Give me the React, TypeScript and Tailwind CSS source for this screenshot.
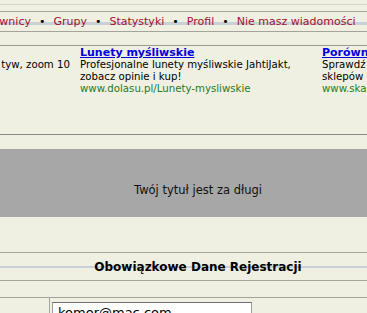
import React from "react";

const sans = { fontFamily: '"DejaVu Sans", Verdana, sans-serif' };

function Sep() {
  return <span className="px-[8px] text-black">•</span>;
}

export default function App() {
  return (
    <div className="w-full h-[313px] overflow-hidden bg-[#f0f0e2]" style={sans}>
      <div className="w-[396px] flex flex-col">
        <div className="h-[4px]" />
        <div className="h-px bg-[#d6d6ce]" />
        <div className="h-[6px]" />
        <div className="h-px bg-[#a4a49c]" />
        <div className="h-[19px] leading-[19px] text-[11px] whitespace-nowrap flex bg-[linear-gradient(to_bottom,transparent_10px,#c9d0d8_10px,#c9d0d8_13px,transparent_13px)]">
          <span className="ml-[-38px] text-[#a3102e]">Użytkownicy</span>
          <Sep />
          <span className="text-[#a3102e]">Grupy</span>
          <Sep />
          <span className="text-[#a3102e]">Statystyki</span>
          <Sep />
          <span className="text-[#a3102e]">Profil</span>
          <Sep />
          <span className="text-[#a3102e]">Nie masz wiadomości</span>
        </div>
        <div className="h-px bg-[#a4a49c]" />
        <div className="h-[13px]" />
        <div className="h-px bg-[#9a9a94]" />
        <div className="h-[88px] pt-px flex gap-[10px] text-[10.2px] leading-[12px] whitespace-nowrap">
          <div className="w-[70px] shrink-0 flex flex-col items-end">
            <div className="h-[12px]" />
            <div className="text-black">tyw, zoom 10</div>
          </div>
          <div className="w-[232px] shrink-0 flex flex-col">
            <a className="text-[11px] font-bold text-[#0000dd] underline">Lunety myśliwskie</a>
            <div className="text-black">Profesjonalne lunety myśliwskie JahtiJakt,</div>
            <div className="text-black">zobacz opinie i kup!</div>
            <div className="text-[#1f7a1f]">www.dolasu.pl/Lunety-mysliwskie</div>
          </div>
          <div className="w-[120px] shrink-0 flex flex-col">
            <a className="text-[11px] font-bold text-[#0000dd] underline">Porównaj</a>
            <div className="text-black">Sprawdź ceny</div>
            <div className="text-black">sklepów</div>
            <div className="text-[#1f7a1f]">www.skapiec.pl</div>
          </div>
        </div>
        <div className="h-px bg-[#8a8a86]" />
        <div className="h-[14px]" />
        <div className="h-[68px] bg-[#a7a7a7] pt-[34px] text-center text-[11.5px] leading-[14px] text-[#111]">
          Twój tytuł jest za długi
        </div>
        <div className="h-[35px]" />
        <div className="h-px bg-[#a4a49c]" />
        <div className="h-[27px] flex items-center justify-center bg-[linear-gradient(to_bottom,transparent_13px,#c9d0d8_13px,#c9d0d8_15px,transparent_15px)]">
          <span className="text-[12px] font-bold text-black leading-[16px] px-[1px]">
            Obowiązkowe Dane Rejestracji
          </span>
        </div>
        <div className="h-px bg-[#a4a49c]" />
        <div className="h-[16px]" />
        <div className="h-px bg-[#a4a49c]" />
        <div className="flex h-[20px]">
          <div className="w-[50px] shrink-0 border-r border-[#a4a49c]" />
          <div className="pl-[2px] pt-[4px]">
            <div className="w-[200px] h-[22px] bg-white border border-[#9a9a9a] border-t-[#6e6e6e] px-[5px] text-[13px] leading-[20px] text-black">
              komor@mac.com
            </div>
          </div>
        </div>
      </div>
    </div>
  );
}
